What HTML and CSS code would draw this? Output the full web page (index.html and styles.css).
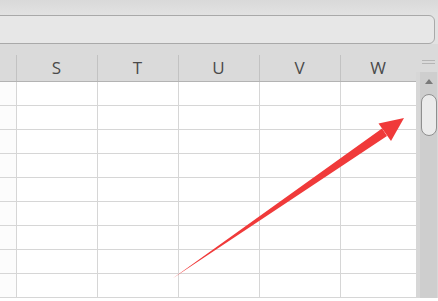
FILE: index.html
```html
<!DOCTYPE html>
<html lang="en">
<head>
	<meta charset="utf-8" />
	<title>Sheet</title>
	<link rel="stylesheet" href="styles.css">
</head>
<body>
<div class="toolbar"></div>
<div class="formulaBar">
	<div class="formulaBox"></div>
</div>

<div class="sheet">
	<div class="grid">
		<div class="headRow">
			<div class="corner"></div>
			<div class="colHead">S</div>
			<div class="colHead">T</div>
			<div class="colHead">U</div>
			<div class="colHead">V</div>
			<div class="colHead last">W</div>
		</div>
		<div class="row"><div class="rowHead"></div><div class="cell"></div><div class="cell"></div><div class="cell"></div><div class="cell"></div><div class="cell"></div></div>
		<div class="row"><div class="rowHead"></div><div class="cell"></div><div class="cell"></div><div class="cell"></div><div class="cell"></div><div class="cell"></div></div>
		<div class="row"><div class="rowHead"></div><div class="cell"></div><div class="cell"></div><div class="cell"></div><div class="cell"></div><div class="cell"></div></div>
		<div class="row"><div class="rowHead"></div><div class="cell"></div><div class="cell"></div><div class="cell"></div><div class="cell"></div><div class="cell"></div></div>
		<div class="row"><div class="rowHead"></div><div class="cell"></div><div class="cell"></div><div class="cell"></div><div class="cell"></div><div class="cell"></div></div>
		<div class="row"><div class="rowHead"></div><div class="cell"></div><div class="cell"></div><div class="cell"></div><div class="cell"></div><div class="cell"></div></div>
		<div class="row"><div class="rowHead"></div><div class="cell"></div><div class="cell"></div><div class="cell"></div><div class="cell"></div><div class="cell"></div></div>
		<div class="row"><div class="rowHead"></div><div class="cell"></div><div class="cell"></div><div class="cell"></div><div class="cell"></div><div class="cell"></div></div>
		<div class="row"><div class="rowHead"></div><div class="cell"></div><div class="cell"></div><div class="cell"></div><div class="cell"></div><div class="cell"></div></div>
	</div>

	<div class="scrollbar">
		<div class="scrollTop"><span class="grip"></span></div>
		<div class="track">
			<span class="upArrow"></span>
			<span class="thumb"></span>
		</div>
	</div>

	<!-- red pointer drawn over the sheet -->
	<svg class="pointer" width="438" height="301" viewBox="0 0 438 301">
		<polygon fill="#f03a3a" points="171,279.5 172.5,278.5 382,128.5 387,136" />
		<polygon fill="#f03a3a" points="404,118 378.5,123.5 391,141" />
	</svg>
</div>
</body>
</html>
```

FILE: styles.css
```css
body{
	margin:0;
	background:#fff;
	font-family:"Open Sans", "Liberation Sans", sans-serif;
	overflow:hidden;
}

.toolbar{
	height:15px;
	background:linear-gradient(#d9d9d9, #e2e2e2);
}

.formulaBar{
	background:#e2e2e2;
	padding-right:3px;
}

/* left edge runs off the screen */
.formulaBox{
	height:27px;
	margin-left:-10px;
	background:#e7e7e7;
	border:1px solid #a9a9a9;
	border-radius:0 6px 6px 0;
}

.sheet{
	position:relative;
	display:grid;
	grid-template-columns:416px 22px;
}

.headRow, .row{
	display:grid;
	grid-template-columns:16px 81px 81px 81px 81px 76px;
}

.headRow{
	height:37px;
	background:#dadada;
	border-bottom:1px solid #b3b3b3;
}

/* header separators start part way down */
.colHead{
	background:linear-gradient(#c2c2c2, #c2c2c2) left bottom / 1px 26px no-repeat;
	text-align:center;
	font-size:17px;
	line-height:23px;
	padding-top:12px;
	color:#4a4a4a;
}

.row{
	height:23px;
	border-bottom:1px solid #d6d6d6;
}

.rowHead{
	background:#fcfcfc;
}

.cell{
	border-left:1px solid #d6d6d6;
}

.scrollbar{
	display:flex;
	flex-direction:column;
	background:#dadada;
}

.scrollTop{
	height:28px;
	display:flex;
	justify-content:center;
	align-items:center;
	padding-left:2px;
}

.grip{
	width:13px;
	height:2px;
	border-top:1px solid #b5b5b5;
	border-bottom:1px solid #b5b5b5;
	margin-top:8px;
}

.track{
	flex:1;
	display:flex;
	flex-direction:column;
	align-items:center;
	padding-left:4px;
	background:linear-gradient(90deg, #d7d7d7 0 4px, #cecece 4px 21px, #d8d8d8 21px);
}

.upArrow{
	width:0;
	height:0;
	margin-top:7px;
	border-left:4px solid transparent;
	border-right:4px solid transparent;
	border-bottom:5px solid #7a7a7a;
}

.thumb{
	width:14px;
	height:40px;
	margin-top:10px;
	margin-right:1px;
	background:#ebebeb;
	border:1px solid #8f8f8f;
	border-radius:8px;
}

.pointer{
	position:absolute;
	left:0;
	top:-44px;
	pointer-events:none;
}
```
